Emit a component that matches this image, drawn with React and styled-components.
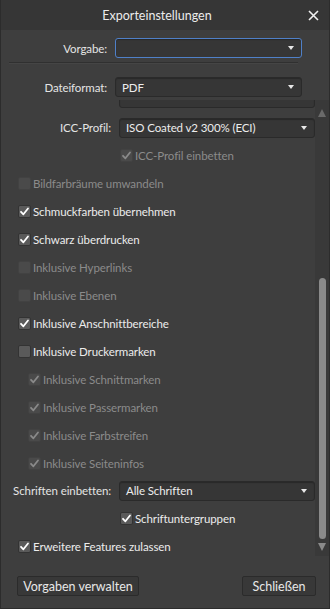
import styled, { createGlobalStyle } from 'styled-components'

const Global = createGlobalStyle`
  html, body { margin: 0; padding: 0; background: #3e3e3e; }
  body { font-family: Lato, "Liberation Sans", sans-serif; font-size: 11.5px; letter-spacing: -0.1px; }
`

const Win = styled.div`
  width: 330px;
  height: 609px;
  box-sizing: border-box;
  border: 1px solid #2c2c2c;
  border-top: none;
  background: #3e3e3e;
  display: flex;
  flex-direction: column;
  color: #e4e4e4;
  overflow: hidden;
`

const TitleBar = styled.div`
  height: 30px;
  flex: none;
  background: #363636;
  display: grid;
  grid-template-columns: 1fr auto;
  align-items: center;
  padding: 0 8px 0 8px;
`

const Title = styled.div`
  text-align: center;
  font-size: 12.5px;
  letter-spacing: 0;
  color: #ececec;
`

const Close = styled.button`
  width: 16px;
  height: 16px;
  padding: 0;
  border: none;
  background: none;
  display: grid;
  place-items: center;
`

const Top = styled.div`
  padding: 8px 27px 0 0;
  display: flex;
  flex-direction: column;
`

const FieldRow = styled.div`
  display: grid;
  grid-template-columns: ${p => p.$label}px 1fr;
  column-gap: 8px;
  align-items: center;
  height: ${p => p.$h || 28}px;
`

const Label = styled.label`
  text-align: right;
  white-space: nowrap;
  color: #e4e4e4;
`

const SelectBox = styled.div`
  height: 20px;
  box-sizing: border-box;
  border: 1px solid ${p => (p.$focus ? '#4f80c8' : '#2a2a2a')};
  border-radius: 3px;
  background: #363636;
  box-shadow: inset 0 1px 1px rgba(0, 0, 0, 0.25);
  display: flex;
  align-items: center;
  justify-content: space-between;
  padding: 0 7px 0 6px;
  color: #ededed;
  white-space: nowrap;
`

const Arrow = styled.span`
  width: 0;
  height: 0;
  border-left: 3.5px solid transparent;
  border-right: 3.5px solid transparent;
  border-top: 4px solid #e8e8e8;
`

const Sep = styled.div`
  height: 1px;
  background: #303030;
  border-bottom: 1px solid #454545;
  margin: 4px 4px 13px 8px;
`

const ScrollView = styled.div`
  margin-top: 3px;
  height: 456px;
  flex: none;
  display: flex;
`

const ScrollContent = styled.div`
  flex: 1;
  overflow: hidden;
`

const Clipped = styled(SelectBox)`
  margin: -12px 0 6px 118px;
`

const CheckRow = styled.div`
  display: flex;
  align-items: center;
  gap: 2px;
  height: ${p => p.$h || 28}px;
  padding-left: ${p => p.$indent}px;
  color: ${p => (p.$disabled ? '#8b8b8b' : '#ececec')};
  white-space: nowrap;
`

const Box = styled.span`
  width: 13px;
  height: 13px;
  box-sizing: border-box;
  border-radius: 2px;
  background: ${p => (p.$disabled ? '#4a4a4a' : '#5a5a5a')};
  border: 1px solid ${p => (p.$disabled ? '#424242' : '#333')};
  display: grid;
  place-items: center;
  flex: none;
`

const Track = styled.div`
  width: 14px;
  flex: none;
  background: #393939;
  display: flex;
  flex-direction: column;
  align-items: center;
  padding: 9px 0 5px;
  box-sizing: border-box;
`

const Tri = styled.span`
  width: 0;
  height: 0;
  border-left: 4px solid transparent;
  border-right: 4px solid transparent;
  ${p => p.$up
    ? `border-bottom: 8px solid ${p.$dim ? '#6a6a6a' : '#8a8a8a'};`
    : `border-top: 8px solid #8a8a8a;`}
`

const Thumb = styled.div`
  width: 7px;
  height: 261px;
  margin-top: auto;
  margin-bottom: 4px;
  border-radius: 4px;
  background: #8a8a8a;
`

const Footer = styled.div`
  flex: 1;
  display: flex;
  justify-content: space-between;
  align-items: flex-start;
  padding: 20px 13px 0 16px;
`

const Button = styled.button`
  width: ${p => p.$w}px;
  height: 20px;
  padding: 0;
  border: 1px solid #2b2b2b;
  border-radius: 2px;
  background: #383838;
  color: #e8e8e8;
  font: inherit;
  font-size: 12.5px;
  letter-spacing: 0;
  line-height: 17px;
`

const Check = ({ checked, disabled }) => (
  <Box $disabled={disabled}>
    {checked && (
      <svg width="11" height="11" viewBox="0 0 11 11">
        <path d="M2 5.8 L4.4 8.3 L9 2.5" fill="none" stroke={disabled ? '#8a8a8a' : '#fff'} strokeWidth="1.8" strokeLinecap="round" strokeLinejoin="round" />
      </svg>
    )}
  </Box>
)

const Option = ({ label, checked, disabled, indent = 17, h }) => (
  <CheckRow $indent={indent} $disabled={disabled} $h={h}>
    <Check checked={checked} disabled={disabled} />
    <span>{label}</span>
  </CheckRow>
)

const Select = ({ value, focus }) => (
  <SelectBox $focus={focus}>
    <span>{value}</span>
    <Arrow />
  </SelectBox>
)

const options = [
  { label: 'Bildfarbräume umwandeln', disabled: true },
  { label: 'Schmuckfarben übernehmen', checked: true },
  { label: 'Schwarz überdrucken', checked: true },
  { label: 'Inklusive Hyperlinks', disabled: true },
  { label: 'Inklusive Ebenen', disabled: true },
  { label: 'Inklusive Anschnittbereiche', checked: true },
  { label: 'Inklusive Druckermarken' },
  { label: 'Inklusive Schnittmarken', checked: true, disabled: true, indent: 27 },
  { label: 'Inklusive Passermarken', checked: true, disabled: true, indent: 27 },
  { label: 'Inklusive Farbstreifen', checked: true, disabled: true, indent: 27 },
  { label: 'Inklusive Seiteninfos', checked: true, disabled: true, indent: 27 },
]

export default function App() {
  return (
    <Win>
      <Global />
      <TitleBar>
        <Title>Exporteinstellungen</Title>
        <Close>
          <svg width="11" height="11" viewBox="0 0 11 11">
            <path d="M1 1 L10 10 M10 1 L1 10" stroke="#f0f0f0" strokeWidth="1.6" />
          </svg>
        </Close>
      </TitleBar>

      <Top>
        <FieldRow $label={106} $h={20}>
          <Label>Vorgabe:</Label>
          <Select value="" focus />
        </FieldRow>
        <Sep />
        <FieldRow $label={106} $h={20}>
          <Label>Dateiformat:</Label>
          <Select value="PDF" />
        </FieldRow>
      </Top>

      <ScrollView>
        <ScrollContent>
          <Clipped />
          <FieldRow $label={110} $h={27}>
            <Label>ICC-Profil:</Label>
            <Select value="ISO Coated v2 300% (ECI)" />
          </FieldRow>
          <Option label="ICC-Profil einbetten" checked disabled indent={119} />
          {options.map(o => (
            <Option key={o.label} {...o} />
          ))}
          <FieldRow $label={110} $h={27}>
            <Label>Schriften einbetten:</Label>
            <Select value="Alle Schriften" />
          </FieldRow>
          <Option label="Schriftuntergruppen" checked indent={119} />
          <Option label="Erweitere Features zulassen" checked />
        </ScrollContent>
        <Track>
          <Tri $up $dim />
          <Thumb />
          <Tri />
        </Track>
      </ScrollView>

      <Footer>
        <Button $w={122}>Vorgaben verwalten</Button>
        <Button $w={74}>Schließen</Button>
      </Footer>
    </Win>
  )
}
